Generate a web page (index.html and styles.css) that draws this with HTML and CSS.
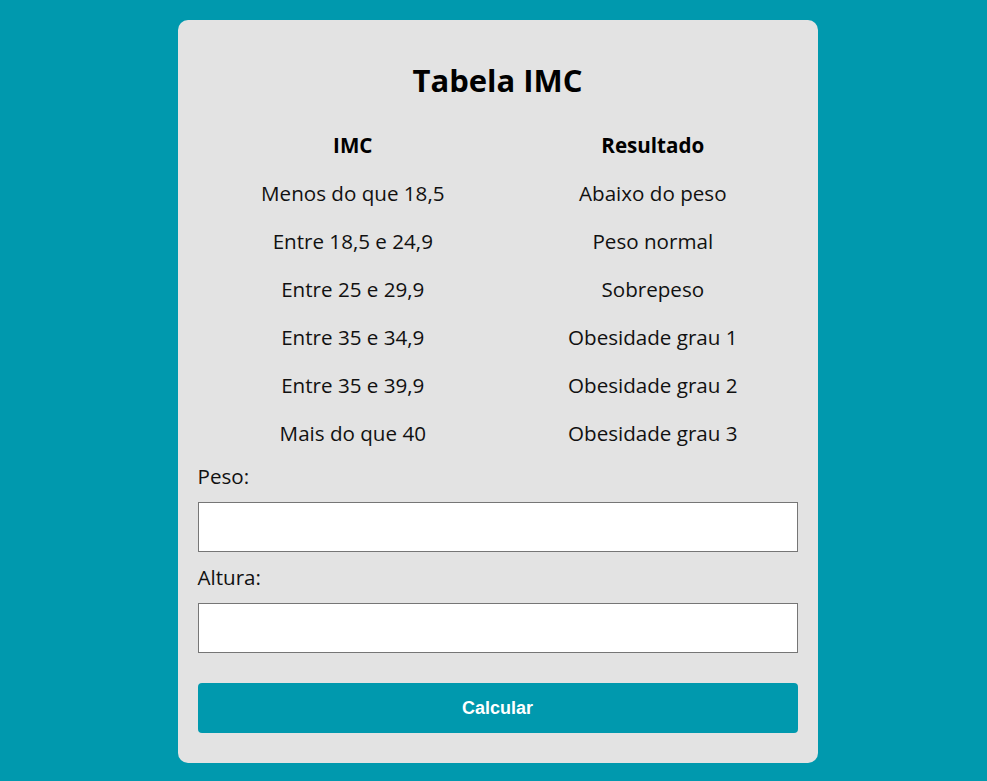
FILE: index.html
```html
<!DOCTYPE html>
<html lang="pt-BR">
<head>
<meta charset="utf-8">
<title>Tabela IMC</title>
<link rel="stylesheet" href="styles.css">
</head>
<body>
<main class="card">
  <h1 class="title">Tabela IMC</h1>
  <table class="imc-table">
    <thead>
      <tr><th>IMC</th><th>Resultado</th></tr>
    </thead>
    <tbody>
      <tr><td>Menos do que 18,5</td><td>Abaixo do peso</td></tr>
      <tr><td>Entre 18,5 e 24,9</td><td>Peso normal</td></tr>
      <tr><td>Entre 25 e 29,9</td><td>Sobrepeso</td></tr>
      <tr><td>Entre 35 e 34,9</td><td>Obesidade grau 1</td></tr>
      <tr><td>Entre 35 e 39,9</td><td>Obesidade grau 2</td></tr>
      <tr><td>Mais do que 40</td><td>Obesidade grau 3</td></tr>
    </tbody>
  </table>
  <form class="form">
    <label class="label" for="peso">Peso:</label>
    <input class="input" id="peso" type="text">
    <label class="label" for="altura">Altura:</label>
    <input class="input" id="altura" type="text">
    <button class="button" type="button">Calcular</button>
  </form>
</main>
</body>
</html>
```
FILE: styles.css
```css
* { box-sizing: border-box; }
html, body { margin: 0; padding: 0; }
body {
  background: #0099ae;
  font-family: "Open Sans", "Liberation Sans", sans-serif;
  font-size: 20.6px;
  color: #111;
  padding: 20px 0 18px 8px;
}
.card {
  width: 640px;
  margin: 0 auto;
  background: #e3e3e3;
  border-radius: 10px;
  padding: 20px 20px 30px;
}
.title {
  margin: 20px 0 20px;
  text-align: center;
  font-size: 31px;
  line-height: 41px;
  font-weight: 700;
  color: #000;
}
.imc-table {
  width: 100%;
  border-collapse: collapse;
}
.imc-table th, .imc-table td {
  padding: 10px;
  line-height: 28px;
  text-align: center;
  font-size: 20.6px;
}
.imc-table th { font-weight: 700; color: #000; }
.imc-table td { font-weight: 400; }
.form {
  display: flex;
  flex-direction: column;
  margin-top: 6px;
}
.label {
  display: block;
  line-height: 27px;
  margin-bottom: 12px;
}
.input {
  height: 50px;
  width: 100%;
  border: 1px solid #767676;
  border-radius: 0;
  background: #fff;
  margin: 0 0 12px;
  font-size: 16px;
  padding: 0 8px;
}
.button {
  margin-top: 18px;
  height: 50px;
  width: 100%;
  border: none;
  border-radius: 4px;
  background: #0099ae;
  color: #fff;
  font-family: "Liberation Sans", Arial, sans-serif;
  font-weight: 700;
  font-size: 18px;
}
```
